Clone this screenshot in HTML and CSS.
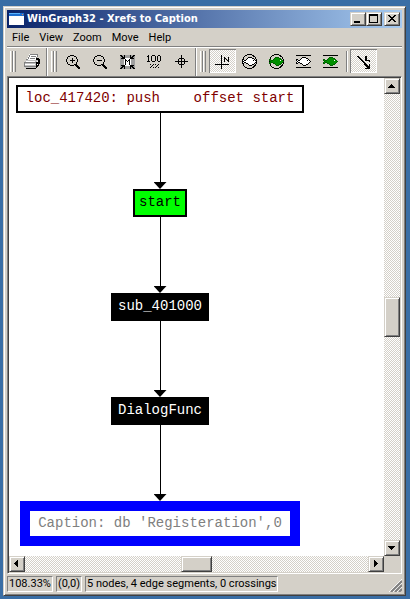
FILE: index.html
```html
<!DOCTYPE html>
<html lang="en">
<head>
<meta charset="utf-8">
<title>WinGraph32 - Xrefs to Caption</title>
<link rel="stylesheet" href="styles.css">
</head>
<body>
<svg class="defs" aria-hidden="true">
  <symbol id="fish" viewBox="0 0 17 16">
    <path class="fish-fill" d="M1 6h2v1h2V6h1V5h1V4h4v1h2v1h1v1h1v1h1v1h-1v1h-1v1h-1v1h-2v1H8v-1H7v-1H6v-1H3v1H1V9h1V8H1z"/>
    <path class="fish-line" d="M1 6h2v1H1zM1 7h1v1H1zM3 7h2v1H3zM2 8h1v1H2zM5 6h1v1H5zM6 5h1v1H6zM7 4h4v1H7zM11 5h2v1h-2zM13 6h1v1h-1zM14 7h1v1h-1zM15 8h1v1h-1zM14 9h1v1h-1zM13 10h1v1h-1zM11 11h2v1h-2zM8 12h3v1H8zM7 11h1v1H7zM5 10h2v1H5zM3 9h2v1H3zM1 9h1v1H1zM1 10h2v1H1z"/>
    <path class="fish-eye" d="M12 7h1v1h-1z"/>
  </symbol>
</svg>
<main class="window">
  <header class="titlebar">
    <svg class="app-icon" viewBox="0 0 16 14" shape-rendering="crispEdges" aria-hidden="true">
      <path fill="#fff" d="M0 1h15v12H0z"/>
      <path fill="#1c6fd0" d="M0 1h15v3H0z"/>
      <path fill="#5ab4ff" d="M0 1h11v1H0z"/>
      <path fill="#e8804a" d="M13 2h1v1h-1z"/>
    </svg>
    <h1 class="title">WinGraph32 - Xrefs to Caption</h1>
    <div class="caption-buttons">
      <button class="raised caption-button" aria-label="Minimize"><svg viewBox="0 0 12 10" shape-rendering="crispEdges"><path d="M2 7h6v2H2z"/></svg></button>
      <button class="raised caption-button" aria-label="Maximize"><svg viewBox="0 0 12 10" shape-rendering="crispEdges"><path fill-rule="evenodd" d="M1 0h9v9H1zM2 2v6h7V2z"/></svg></button>
      <button class="raised caption-button close" aria-label="Close"><svg viewBox="0 0 12 10" shape-rendering="crispEdges"><path d="M2 1h2v1h1v1h2v-1h1v-1h2v1h-1v1h-1v1h-1v1h1v1h1v1h1v1h-2v-1h-1v-1h-2v1h-1v1h-2v-1h1v-1h1v-1h1v-1h-1v-1h-1v-1h-1z"/></svg></button>
    </div>
  </header>

  <nav class="menubar">
    <button class="menu">File</button>
    <button class="menu">View</button>
    <button class="menu">Zoom</button>
    <button class="menu">Move</button>
    <button class="menu">Help</button>
  </nav>

  <div class="toolbar">
    <div class="band">
      <span class="gripper"></span>
      <button class="tool" aria-label="Print"><svg viewBox="0 0 17 16" shape-rendering="crispEdges">
        <path fill="#fff" d="M5 1h9v1h-1v2h-1v3H3V5h1V3h1z"/>
        <path fill="#808080" d="M6 1h8v1H6zM5 2h1v2H5zM4 4h1v2H4zM7 3h5v1H7zM6 5h5v1H6zM13 2h1v2h-1zM12 4h1v3h-1z"/>
        <path fill="#c0c0c0" d="M2 7h11l2-2v6l-3 4H1V8z"/>
        <path fill="#fff" d="M2 8h9v1H2zM1 11h10v1H1z"/>
        <path fill="#808080" d="M1 9h11v1H1zM1 13h11v1H1zM2 6h2v1H2zM0 9h1v5H0z"/>
        <path d="M12 5h3v1h1v5h-1v2h-1v1h-1v1h-1V9h1V8h1V7h-2zM2 15h10v1H2z"/>
        <path fill="#fff" d="M13 8h1v1h-1zM13 11h1v1h-1z"/>
      </svg></button>
    </div>
    <div class="band">
      <span class="gripper"></span>
      <button class="tool" aria-label="Zoom in"><svg viewBox="0 0 17 16" shape-rendering="crispEdges">
        <path d="M5 2h4v1H5zM3 3h2v1H3zM9 3h2v1H9zM2 4h1v2H2zM11 4h1v2h-1zM1 6h1v3H1zM12 6h1v3h-1zM2 9h1v2H2zM11 9h1v2h-1zM3 11h2v1H3zM9 11h2v1H9zM5 12h4v1H5zM5 7h5v1H5zM7 5h1v5H7zM11 11h1v1h1v1h1v1h1v2h-2v-1h-1v-1h-1v-1h-1v-1h1z"/>
      </svg></button>
      <button class="tool" aria-label="Zoom out"><svg viewBox="0 0 17 16" shape-rendering="crispEdges">
        <path d="M5 2h4v1H5zM3 3h2v1H3zM9 3h2v1H9zM2 4h1v2H2zM11 4h1v2h-1zM1 6h1v3H1zM12 6h1v3h-1zM2 9h1v2H2zM11 9h1v2h-1zM3 11h2v1H3zM9 11h2v1H9zM5 12h4v1H5zM5 7h5v1H5zM11 11h1v1h1v1h1v1h1v2h-2v-1h-1v-1h-1v-1h-1v-1h1z"/>
      </svg></button>
      <button class="tool" aria-label="Fit window"><svg viewBox="0 0 17 16" shape-rendering="crispEdges">
        <path fill="#a0a0a0" d="M1 2h15v14H1z"/>
        <path fill="#fff" d="M5 5h7v8H5z"/>
        <path d="M1 2h2v1h1v1h1V2h1v4H2V5h1V4H2V3H1zM16 2h-2v1h-1v1h-1V2h-1v4h4V5h-1V4h1V3h1zM1 16h2v-1h1v-1h1v2h1v-4H2v1h1v1H2v1H1zM16 16h-2v-1h-1v-1h-1v2h-1v-4h4v1h-1v1h1v1h1z"/>
        <path d="M6 6h1v1h1v1h1V7h1V6h1v6h-1V8H9v1H8V8H7v4H6z"/>
      </svg></button>
      <button class="tool" aria-label="Zoom 100%"><svg viewBox="0 0 17 16" shape-rendering="crispEdges">
        <path fill-rule="evenodd" d="M2 2h1v6h1v1H1V8h1V4H1V3h1zM6 2h3v1h1v5H9v1H6V8H5V3h1zM6 3v5h3V3zM12 2h2v1h1v5h-1v1h-2V8h-1V3h1zM12 3v5h2V3z"/>
        <path d="M4 11h1v1H4zM7 11h1v1H7zM6 12h1v1H6zM5 13h1v1H5zM4 14h1v1H4zM7 14h1v1H7zM9 11h1v1H9zM12 11h1v1h-1zM11 12h1v1h-1zM10 13h1v1h-1zM9 14h1v1H9zM12 14h1v1h-1z"/>
      </svg></button>
      <button class="tool" aria-label="Center"><svg viewBox="0 0 17 16" shape-rendering="crispEdges">
        <path fill-rule="evenodd" d="M8 2h1v3h2v1h1v2h3v1h-3v2h-1v1H9v3H8v-3H6v-1H5V9H2V8h3V6h1V5h2zM6 6v2h2V6zM9 6v2h2V6zM6 9v2h2V9zM9 9v2h2V9z"/>
      </svg></button>
    </div>
    <div class="band last">
      <span class="gripper"></span>
      <button class="tool pressed" aria-label="Layout" aria-pressed="true"><svg viewBox="0 0 17 16" shape-rendering="crispEdges">
        <path d="M7 2h1v14H7zM1 11h14v1H1zM10 4h1v1h1v1h1v1h1V4h1v5h-1V8h-1V7h-1V6h-1v3h-1z"/>
      </svg></button>
      <button class="tool" aria-label="Fisheye, circular"><svg class="white" viewBox="0 0 17 16" shape-rendering="crispEdges"><ellipse class="ring" cx="8.5" cy="8.5" rx="7" ry="7"/><use href="#fish"/></svg></button>
      <button class="tool" aria-label="Fisheye, circular, filled"><svg class="green" viewBox="0 0 17 16" shape-rendering="crispEdges"><ellipse class="ring" cx="8.5" cy="8.5" rx="7" ry="7"/><use href="#fish"/></svg></button>
      <button class="tool" aria-label="Fisheye, flat"><svg class="white" viewBox="0 0 17 16" shape-rendering="crispEdges"><path d="M1 2h15v1H1zM1 14h15v1H1z"/><use href="#fish"/></svg></button>
      <button class="tool" aria-label="Fisheye, flat, filled"><svg class="green" viewBox="0 0 17 16" shape-rendering="crispEdges"><path d="M1 2h15v1H1zM1 14h15v1H1z"/><use href="#fish"/></svg></button>
      <span class="separator"></span>
      <button class="tool pressed" aria-label="Edge labels" aria-pressed="true"><svg viewBox="0 0 17 16" shape-rendering="crispEdges">
        <path d="M2 3h2v1h1v1h1v1h1v1h1v1h1v1h1v1h1v1h1v1h1v1h1v-2h1v5h-5v-1h2v-1h-1v-1h-1v-1h-1v-1H9v-1H8V9H7V8H6V7H5V6H4V5H3V4H2z"/>
        <path d="M10 3h2v4h3v2h-1V8h-4z"/>
      </svg></button>
    </div>
  </div>

  <section class="client">
    <div class="canvas">
      <div class="graph">
        <div class="node code">loc_417420: push    offset start</div>
        <div class="edge"></div>
        <div class="node entry">start</div>
        <div class="edge"></div>
        <div class="node function">sub_401000</div>
        <div class="edge"></div>
        <div class="node function">DialogFunc</div>
        <div class="edge"></div>
        <div class="node target">Caption: db 'Registeration',0</div>
      </div>
    </div>
    <div class="scrollbar vertical">
      <button class="raised arrow" aria-label="Scroll up"><svg viewBox="0 0 12 12" shape-rendering="crispEdges"><path d="M5 4h1v1h1v1h1v1h1v1H2V7h1V6h1V5h1z"/></svg></button>
      <span class="track"></span><span class="raised thumb"></span><span class="track"></span>
      <button class="raised arrow" aria-label="Scroll down"><svg viewBox="0 0 12 12" shape-rendering="crispEdges"><path d="M2 4h7v1H8v1H7v1H6v1H5V7H4V6H3V5H2z"/></svg></button>
    </div>
    <div class="scrollbar horizontal">
      <button class="raised arrow" aria-label="Scroll left"><svg viewBox="0 0 12 12" shape-rendering="crispEdges"><path d="M7 2v7H6V8H5V7H4V6H3V5h1V4h1V3h1V2z"/></svg></button>
      <span class="track"></span><span class="raised thumb"></span><span class="track"></span>
      <button class="raised arrow" aria-label="Scroll right"><svg viewBox="0 0 12 12" shape-rendering="crispEdges"><path d="M4 2v7h1V8h1V7h1V6h1V5H7V4H6V3H5V2z"/></svg></button>
    </div>
  </section>

  <footer class="statusbar">
    <span class="panel">108.33%</span>
    <span class="panel">(0,0)</span>
    <span class="panel">5 nodes, 4 edge segments, 0 crossings</span>
    <svg class="grip" viewBox="0 0 13 13" aria-hidden="true">
      <path stroke="#fff" d="M0 13L13 0M4 13L13 4M8 13L13 8"/>
      <path stroke="#808080" stroke-width="2" d="M2 13L13 2M6 13L13 6M10 13L13 10"/>
    </svg>
  </footer>
</main>
</body>
</html>
```
FILE: styles.css
```css
:root {
  --face: #d4d0c8;
  --shadow: #808080;
  --dark: #404040;
  --stipple: repeating-conic-gradient(#fff 0 25%, var(--face) 0 50%) 0 0 / 2px 2px;
}

* { box-sizing: border-box; }

body {
  margin: 0;
  min-height: 100vh;
  display: flex;
  flex-direction: column;
  padding: 6px 4px 3px 3px;
  background: #3a6ea5;
  color: #000;
  font: 11px/14px Roboto, "Liberation Sans", sans-serif;
}

button {
  margin: 0;
  padding: 0;
  border: 0;
  background: none;
  color: inherit;
  font: inherit;
}

svg { display: block; }

.defs { position: absolute; width: 0; height: 0; }

.window {
  flex: 1;
  display: flex;
  flex-direction: column;
  padding: 3px;
}

.window,
.raised {
  background: var(--face);
  border: 1px solid;
  border-color: var(--face) var(--dark) var(--dark) var(--face);
  box-shadow: inset 1px 1px #fff, inset -1px -1px var(--shadow);
}

/* Title bar */
.titlebar {
  display: flex;
  align-items: center;
  height: 18px;
  padding: 0 2px;
  background: linear-gradient(90deg, #0a246a, #a6caf0);
}
.app-icon { width: 16px; height: 14px; }
.title {
  flex: 1;
  margin: 0 0 0 2px;
  color: #fff;
  font: bold 11px/14px "DejaVu Sans Condensed", "DejaVu Sans", sans-serif;
  white-space: nowrap;
}
.caption-buttons { display: flex; }
.caption-button { width: 16px; height: 14px; padding: 1px; }
.caption-button svg { width: 12px; height: 10px; }
.close { margin-left: 2px; }

/* Menu bar */
.menubar {
  display: flex;
  gap: 10px;
  height: 20px;
  padding: 2px 5px 0;
  border-bottom: 1px solid #fff;
  box-shadow: inset 0 -1px var(--shadow);
}
.menu { height: 16px; }

/* Toolbar */
.toolbar { display: flex; height: 28px; }
.band {
  display: flex;
  padding: 1px 1px 0 3px;
  border-right: 1px solid #fff;
  box-shadow: inset -1px 0 var(--shadow);
}
.band.last { border: 0; box-shadow: none; }
.gripper {
  width: 6px;
  height: 21px;
  margin: 2px 3px 0 0;
  background: linear-gradient(90deg, #fff 1px, var(--face) 1px 2px, var(--shadow) 2px) 0 0 / 3px 100%;
}
.tool {
  width: 27px;
  height: 24px;
  padding: 4px 5px;
}
.tool svg { width: 17px; height: 16px; }
.pressed {
  background: var(--stipple);
  box-shadow: inset 1px 1px var(--shadow), inset -1px -1px #fff;
}
.separator {
  width: 2px;
  height: 21px;
  margin: 2px 2px 0;
  background: linear-gradient(90deg, var(--shadow) 1px, #fff 1px);
}
.white { --fish: #fff; --fish-line: #000; --eye: #000; }
.green { --fish: #009000; --fish-line: #006000; --eye: #fff; }
.fish-fill { fill: var(--fish); }
.fish-line { fill: var(--fish-line); }
.fish-eye { fill: var(--eye); }
.ring { fill: none; stroke: #000; }

/* Graph view */
.client {
  flex: 1;
  display: grid;
  grid-template-columns: 1fr 16px;
  grid-template-rows: 1fr 16px;
  border: 1px solid;
  border-color: var(--shadow) #fff #fff var(--shadow);
  padding: 1px;
  box-shadow: inset 1px 1px var(--dark);
}
.canvas {
  padding: 7px;
  background: #fff;
  overflow: hidden;
}
.graph {
  display: flex;
  flex-direction: column;
  align-items: center;
  width: max-content;
}
.node {
  height: 28px;
  border: 2px solid #000;
  font: 14px/22px "Liberation Mono", monospace;
  text-align: center;
  white-space: pre;
}
.code { width: 288px; color: #800000; }
.entry { width: 54px; background: #0f0; }
.function { width: 98px; background: #000; color: #fff; }
.target {
  width: 280px;
  height: 45px;
  border: 10px solid #00f;
  color: #808080;
  line-height: 24px;
}
.edge {
  display: flex;
  flex-direction: column;
  align-items: center;
  width: 13px;
  height: 76px;
}
.edge::before {
  content: "";
  flex: 1;
  width: 1px;
  background: #000;
}
.edge::after {
  content: "";
  width: 13px;
  height: 7px;
  background: #000;
  clip-path: polygon(0 0, 100% 0, 50% 100%);
}

/* Scroll bars */
.scrollbar { display: flex; }
.vertical { flex-direction: column; }
.arrow { width: 16px; height: 16px; padding: 1px; }
.arrow svg { width: 12px; height: 12px; }
.track { flex: 1; background: var(--stipple); }
.vertical .thumb { height: 40px; }
.horizontal .thumb { width: 31px; }

/* Status bar */
.statusbar {
  display: flex;
  gap: 3px;
  height: 18px;
  padding-top: 2px;
}
.panel {
  padding: 0 1px;
  line-height: 14px;
  border: 1px solid;
  border-color: var(--shadow) #fff #fff var(--shadow);
  white-space: nowrap;
}
.grip {
  width: 13px;
  height: 13px;
  margin: 3px 0 0 auto;
  fill: none;
}
```
